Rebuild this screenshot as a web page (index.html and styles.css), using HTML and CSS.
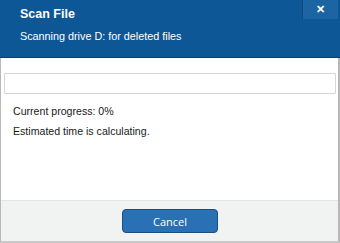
FILE: index.html
```html
<!DOCTYPE html>
<html>
<head>
<meta charset="utf-8">
<link rel="stylesheet" href="styles.css">
</head>
<body>
<div class="dialog">
  <div class="header">
    <div class="titles">
      <div class="title">Scan File</div>
      <div class="subtitle">Scanning drive D: for deleted files</div>
    </div>
    <div class="close">&#x2715;</div>
  </div>
  <div class="body">
    <div class="progress"></div>
    <div class="line first">Current progress: 0%</div>
    <div class="line">Estimated time is calculating.</div>
  </div>
  <div class="footer">
    <button class="cancel">Cancel</button>
  </div>
</div>
</body>
</html>
```
FILE: styles.css
```css
html, body {
  margin: 0;
  padding: 0;
  background: #ffffff;
}
.dialog {
  width: 340px;
  height: 243px;
  box-sizing: border-box;
  display: flex;
  flex-direction: column;
  font-family: "Liberation Sans", Arial, sans-serif;
  font-size: 10.6px;
  color: #1a1a1a;
  border-left: 1px solid #b8b8b8;
  border-right: 2px solid #b8b8b8;
  border-bottom: 2px solid #c8c8c8;
}
.header {
  height: 57px;
  background: #0e5796;
  border-bottom: 1px solid #0a3f6e;
  display: flex;
  justify-content: space-between;
  margin: 0 -2px 0 -1px;
}
.titles {
  padding: 4px 0 0 20px;
  color: #ffffff;
}
.title {
  font-weight: bold;
  font-size: 12.5px;
  height: 20px;
  line-height: 20px;
}
.subtitle {
  margin-top: 5px;
  font-size: 10.8px;
  line-height: 14px;
}
.close {
  width: 35px;
  height: 19px;
  margin-right: 2px;
  background: #1c64a2;
  border-left: 1px solid #0a4a80;
  color: #fff;
  font-weight: bold;
  font-size: 11px;
  text-align: center;
  line-height: 19px;
}
.body {
  flex: 1;
  padding: 15px 2px 0 3px;
}
.progress {
  height: 19px;
  border: 1px solid #d6d6d6;
  border-radius: 1px;
  background: #fff;
}
.line {
  padding-left: 9px;
  height: 20px;
  line-height: 20px;
}
.line.first {
  margin-top: 7px;
}
.footer {
  height: 40px;
  background: #f1f2f2;
  border-top: 1px solid #e4e4e4;
  display: flex;
  justify-content: center;
  align-items: center;
}
.cancel {
  width: 96px;
  height: 24px;
  background: #2a70b4;
  border: 1px solid #1a4f85;
  border-radius: 4px;
  color: #fff;
  font-family: "Open Sans", sans-serif;
  font-size: 11px;
  padding: 0;
  margin-left: 1px;
}
```
